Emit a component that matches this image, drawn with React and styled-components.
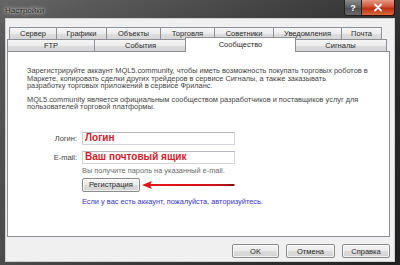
import React from "react"
import styled, { createGlobalStyle } from "styled-components"

const GlobalStyle = createGlobalStyle`
  html, body {
    margin: 0;
    padding: 0;
    background: #2b2b2b;
  }
  body {
    font-family: "Liberation Sans", Arial, sans-serif;
  }
`;

const rowOne = [
  { label: "Сервер", w: 48 },
  { label: "Графики", w: 51 },
  { label: "Объекты", w: 55 },
  { label: "Торговля", w: 55 },
  { label: "Советники", w: 60 },
  { label: "Уведомления", w: 69 },
  { label: "Почта", w: 41 },
];

const rowTwo = [
  { label: "FTP", w: 88 },
  { label: "События", w: 93 },
  { label: "Сообщество", w: 109, active: true },
  { label: "Сигналы", w: 93 },
];

function App() {
  return (
    <>
      <GlobalStyle />
      <Window>
        <TitleBar>
          <Title>Настройки</Title>
          <Controls>
            <HelpButton>?</HelpButton>
            <CloseButton>
              <svg width="10" height="9" viewBox="0 0 10 9">
                <path d="M2 1.5 L8 7.5 M8 1.5 L2 7.5" stroke="#fff" strokeWidth="1.8" strokeLinecap="round" />
              </svg>
            </CloseButton>
          </Controls>
        </TitleBar>

        <Client>
          <TabRow $indent={3}>
            {rowOne.map((t) => (
              <Tab key={t.label} $w={t.w}>{t.label}</Tab>
            ))}
          </TabRow>
          <TabRow $indent={1}>
            {rowTwo.map((t) =>
              t.active ? (
                <ActiveTab key={t.label} $w={t.w}>{t.label}</ActiveTab>
              ) : (
                <Tab key={t.label} $w={t.w}>{t.label}</Tab>
              )
            )}
          </TabRow>

          <Panel>
            <Paragraph>
              Зарегистрируйте аккаунт MQL5.community, чтобы иметь возможность покупать торговых роботов в<br />
              Маркете, копировать сделки других трейдеров в сервисе Сигналы, а также заказывать<br />
              разработку торговых приложений в сервисе Фриланс.
            </Paragraph>
            <Paragraph $gap={6}>
              MQL5.community является официальным сообществом разработчиков и поставщиков услуг для<br />
              пользователей торговой платформы.
            </Paragraph>

            <Form>
              <Label>Логин:</Label>
              <Field><Hint>Логин</Hint></Field>
              <Label>E-mail:</Label>
              <Field><Hint>Ваш почтовый ящик</Hint></Field>
              <span />
              <Note>Вы получите пароль на указанный e-mail.</Note>
              <span />
              <ActionRow>
                <Button $w={64}>Регистрация</Button>
                <svg width="104" height="10" viewBox="0 0 104 10">
                  <defs>
                    <linearGradient id="arrowLine" x1="0" x2="1" y1="0" y2="0">
                      <stop offset="0" stopColor="#e8141c" />
                      <stop offset="0.8" stopColor="#d01018" />
                      <stop offset="1" stopColor="#7a1010" />
                    </linearGradient>
                  </defs>
                  <path d="M8 4 H103 V6 H8 Z" fill="url(#arrowLine)" />
                  <path d="M0 5 L11 0.5 L9 5 L11 9.5 Z" fill="#e8141c" />
                </svg>
              </ActionRow>
              <span />
              <Link>Если у вас есть аккаунт, пожалуйста, авторизуйтесь.</Link>
            </Form>
          </Panel>

          <Footer>
            <Button $w={47}>OK</Button>
            <Button $w={49}>Отмена</Button>
            <Button $w={48}>Справка</Button>
          </Footer>
        </Client>
      </Window>
    </>
  );
}

export default App;

const Window = styled.div`
  width: 400px;
  height: 265px;
  display: flex;
  flex-direction: column;
  box-sizing: border-box;
  padding: 0 5px 3px 5px;
  background:
    linear-gradient(90deg, rgba(255,255,255,0.14) 0%, rgba(255,255,255,0.05) 35%, rgba(0,0,0,0.3) 100%),
    linear-gradient(#4c4c4c, #3a3a3a 20%, #2e2e2e 100%);
  overflow: hidden;
`;

const TitleBar = styled.div`
  height: 18px;
  display: flex;
  align-items: flex-start;
  justify-content: space-between;
`;

const Title = styled.span`
  margin-top: 6px;
  font-size: 8px;
  color: #1a1a1a;
  text-shadow: 0 0 4px rgba(255,255,255,0.9), 0 0 2px rgba(255,255,255,0.8);
`;

const Controls = styled.div`
  display: flex;
  height: 16px;
`;

const HelpButton = styled.div`
  width: 18px;
  display: flex;
  align-items: center;
  justify-content: center;
  box-sizing: border-box;
  border: 1px solid #222;
  border-top: none;
  border-radius: 0 0 0 3px;
  background: linear-gradient(#8a8a8a, #5e5e5e 50%, #4c4c4c 51%, #6a6a6a);
  color: #fff;
  font-size: 9px;
  font-weight: bold;
`;

const CloseButton = styled.div`
  width: 33px;
  display: flex;
  align-items: center;
  justify-content: center;
  box-sizing: border-box;
  border: 1px solid #3a0b05;
  border-left: none;
  border-top: none;
  border-radius: 0 0 3px 0;
  background: linear-gradient(#e49a84, #cf5236 45%, #bb2e12 55%, #d86a3e);
`;

const Client = styled.div`
  flex: 1;
  display: flex;
  flex-direction: column;
  background: #f0f0f0;
  border: 1px solid #cfcfcf;
  padding: 8px 4px 0 0;
`;

const TabRow = styled.div`
  display: flex;
  padding-left: ${(p) => p.$indent}px;
  height: 12px;
  position: relative;
`;

const Tab = styled.div`
  width: ${(p) => p.$w}px;
  box-sizing: border-box;
  display: flex;
  align-items: center;
  justify-content: center;
  border: 1px solid #8d9096;
  border-bottom: none;
  margin-right: -1px;
  background: linear-gradient(#f6f6f6, #ececec 50%, #dedede 51%, #d6d6d6);
  font-size: 7.5px;
  color: #2a2a2a;
  white-space: nowrap;
`;

const ActiveTab = styled.div`
  width: ${(p) => p.$w + 2}px;
  height: 15px;
  margin: -2px -2px 0 -1px;
  box-sizing: border-box;
  position: relative;
  z-index: 2;
  display: flex;
  align-items: flex-start;
  justify-content: center;
  padding-top: 2px;
  border: 1px solid #8d9096;
  border-bottom: none;
  background: #fff;
  font-size: 7.5px;
  color: #2a2a2a;
`;

const Panel = styled.div`
  margin-left: 1px;
  height: 186px;
  box-sizing: border-box;
  background: #fff;
  border: 1px solid #8d9096;
  padding: 15px 0 0 19px;
  display: flex;
  flex-direction: column;
`;

const Paragraph = styled.p`
  margin: ${(p) => p.$gap || 0}px 0 0 0;
  font-size: 7.4px;
  line-height: 7.6px;
  color: #444;
  white-space: nowrap;
`;

const Form = styled.div`
  display: grid;
  grid-template-columns: 69px 153px;
  column-gap: 5px;
  row-gap: 6px;
  margin: 21px 0 0 -19px;
  align-items: center;
`;

const Label = styled.span`
  text-align: right;
  font-size: 7.5px;
  color: #444;
`;

const Field = styled.div`
  height: 13px;
  box-sizing: border-box;
  border: 1px solid #d2d4d8;
  border-top-color: #b5b8be;
  background: #fff;
  display: flex;
  align-items: center;
  padding-left: 2px;
`;

const Hint = styled.span`
  font-size: 10px;
  font-weight: bold;
  color: #d8202a;
  line-height: 10px;
  white-space: nowrap;
`;

const Note = styled.span`
  margin-top: -3px;
  font-size: 7.4px;
  line-height: 8px;
  color: #6a6a6a;
  white-space: nowrap;
`;

const ActionRow = styled.div`
  margin-top: -3px;
  display: flex;
  align-items: center;
  gap: 2px;
`;

const Button = styled.div`
  width: ${(p) => p.$w}px;
  height: 14px;
  box-sizing: border-box;
  display: flex;
  align-items: center;
  justify-content: center;
  border: 1px solid #8a8a8a;
  border-radius: 2px;
  background: linear-gradient(#f4f4f4, #ebebeb 50%, #dcdcdc 51%, #d2d2d2);
  box-shadow: inset 0 0 0 1px rgba(255,255,255,0.7);
  font-size: 7.5px;
  color: #2a2a2a;
`;

const Link = styled.span`
  margin-top: -1px;
  font-size: 7.4px;
  color: #3535c8;
  white-space: nowrap;
`;

const Footer = styled.div`
  display: flex;
  justify-content: flex-end;
  gap: 7px;
  margin-top: 7px;
`;
